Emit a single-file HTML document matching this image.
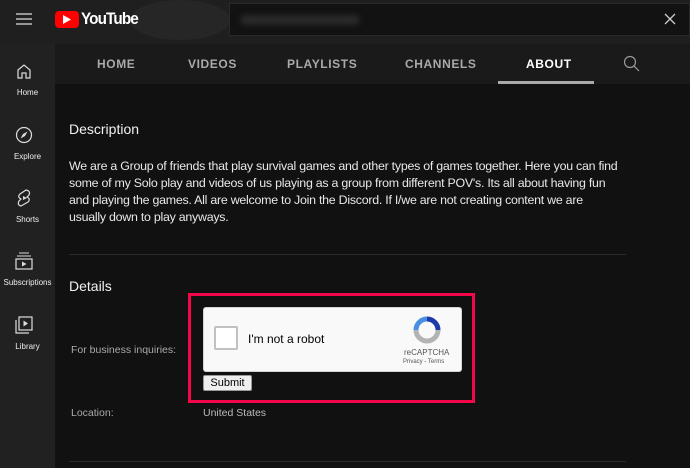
<!DOCTYPE html>
<html><head><style>
*{margin:0;padding:0;box-sizing:border-box}
body{width:690px;height:468px;overflow:hidden;background:#111;font-family:"Liberation Sans",sans-serif;position:relative;color:#eee}
.abs{position:absolute}
#top{left:0;top:0;width:690px;height:44px;background:#1f1f1f}
#side{left:0;top:44px;width:55px;height:424px;background:#212121}
#tabs{left:55px;top:44px;width:635px;height:40px;background:#1a1a1a}
.tab{position:absolute;top:57px;font-size:12px;font-weight:bold;letter-spacing:.6px;color:#aaa}
.si{position:absolute;width:55px;text-align:center;font-size:8px;color:#eee}
.desc{left:69px;top:158px;font-size:12.4px;line-height:17px;color:#e8e8e8;white-space:nowrap;letter-spacing:-0.25px}
</style></head><body>
<div class="abs" id="top"></div>
<div class="abs" style="left:130px;top:0;width:100px;height:40px;border-radius:50%;background:#262626"></div>
<div class="abs" style="left:229px;top:3px;width:461px;height:33px;background:#121212;border:1px solid #2a2a2a"></div>
<div class="abs" style="left:240px;top:15px;width:120px;height:10px;background:#2a2a2a;border-radius:5px;filter:blur(3px)"></div>
<svg class="abs" style="left:664px;top:13px" width="12" height="12"><path d="M1 1L11 11M11 1L1 11" stroke="#ccc" stroke-width="1.3"/></svg>
<svg class="abs" style="left:16px;top:13px" width="16" height="12"><path d="M0 1H16M0 6H16M0 11H16" stroke="#ddd" stroke-width="1.3"/></svg>
<div class="abs" style="left:55px;top:11px;width:24px;height:17px;background:#f00;border-radius:4px"></div>
<svg class="abs" style="left:63px;top:15px" width="8" height="9"><path d="M0 0L8 4.5L0 9Z" fill="#fff"/></svg>
<div class="abs" style="left:81px;top:9px;font-size:17px;font-weight:bold;color:#fff;letter-spacing:-1px;transform:scaleX(.9);transform-origin:left">YouTube</div>
<div class="abs" id="side"></div>
<div class="abs" id="tabs"></div>
<div class="tab" style="left:97px">HOME</div>
<div class="tab" style="left:188px">VIDEOS</div>
<div class="tab" style="left:287px">PLAYLISTS</div>
<div class="tab" style="left:405px">CHANNELS</div>
<div class="tab" style="left:526px;color:#fff">ABOUT</div>
<div class="abs" style="left:498px;top:81px;width:96px;height:3px;background:#aaa"></div>
<svg class="abs" style="left:623px;top:55px" width="17" height="17"><circle cx="7" cy="7" r="5.5" fill="none" stroke="#999" stroke-width="1.2"/><path d="M11 11L16 16" stroke="#999" stroke-width="1.2"/></svg>
<svg class="abs" style="left:16px;top:63px" width="16" height="16"><path d="M2 7L8 2L14 7V15H10V10H6V15H2Z" fill="none" stroke="#ddd" stroke-width="1.2"/></svg>
<div class="si" style="top:88px">Home</div>
<svg class="abs" style="left:15px;top:126px" width="18" height="18"><circle cx="9" cy="9" r="7.5" fill="none" stroke="#ddd" stroke-width="1.2"/><path d="M12.5 5.5L10 10L5.5 12.5L8 8Z" fill="#ddd"/></svg>
<div class="si" style="top:152px">Explore</div>
<svg class="abs" style="left:16px;top:188px" width="16" height="20"><path d="M10 2L4 6Q1 9 5 11L3 13Q1 17 5 18L12 14Q15 11 11 9L13 7Q15 3 10 2Z" fill="none" stroke="#ddd" stroke-width="1.2"/><path d="M7 8L11 10L7 12Z" fill="#ddd"/></svg>
<div class="si" style="top:215px">Shorts</div>
<svg class="abs" style="left:14px;top:252px" width="20" height="18"><path d="M5 1H15M3 4H17" stroke="#ddd" stroke-width="1.1"/><rect x="2" y="7" width="16" height="10" fill="none" stroke="#ddd" stroke-width="1.2"/><path d="M8 9.5L12.5 12L8 14.5Z" fill="#ddd"/></svg>
<div class="si" style="top:278px">Subscriptions</div>
<svg class="abs" style="left:15px;top:316px" width="18" height="18"><path d="M1 4V17H14" fill="none" stroke="#ddd" stroke-width="1.2"/><rect x="4" y="1" width="13" height="13" fill="none" stroke="#ddd" stroke-width="1.2"/><path d="M8.5 4.5L13 7.5L8.5 10.5Z" fill="#ddd"/></svg>
<div class="si" style="top:342px">Library</div>
<div class="abs" style="left:69px;top:121px;font-size:14px;color:#f1f1f1">Description</div>
<div class="abs desc">We are a Group of friends that play survival games and other types of games together. Here you can find<br>some of my Solo play and videos of us playing as a group from different POV's. Its all about having fun<br>and playing the games. All are welcome to Join the Discord. If I/we are not creating content we are<br>usually down to play anyways.</div>
<div class="abs" style="left:69px;top:254px;width:557px;height:1px;background:#2a2a2a"></div>
<div class="abs" style="left:69px;top:278px;font-size:14px;color:#f1f1f1">Details</div>
<div class="abs" style="left:71px;top:344px;font-size:10.5px;color:#aaa">For business inquiries:</div>
<div class="abs" style="left:71px;top:407px;font-size:10.5px;color:#aaa">Location:</div>
<div class="abs" style="left:203px;top:407px;font-size:10.5px;color:#bbb">United States</div>
<div class="abs" style="left:69px;top:461px;width:557px;height:1px;background:#2a2a2a"></div>
<div class="abs" style="left:188px;top:293px;width:287px;height:110px;border:3px solid #f5064a"></div>
<div class="abs" style="left:203px;top:307px;width:259px;height:65px;background:#f9f9f9;border:1px solid #d3d3d3;border-radius:3px"></div>
<div class="abs" style="left:214px;top:326px;width:24px;height:24px;background:#fff;border:2px solid #c1c1c1;border-radius:2px"></div>
<div class="abs" style="left:248px;top:332px;font-size:12px;color:#000">I'm not a robot</div>
<svg class="abs" style="left:413px;top:316px" width="28" height="28"><path d="M14 3A11 11 0 0 1 25 14" fill="none" stroke="#1c3aa9" stroke-width="5"/><path d="M3 14A11 11 0 0 1 14 3" fill="none" stroke="#4a90e2" stroke-width="5"/><path d="M25 14A11 11 0 0 1 3 14" fill="none" stroke="#b3b3b3" stroke-width="5"/></svg>
<div class="abs" style="left:404px;top:348px;font-size:8px;color:#555">reCAPTCHA</div>
<div class="abs" style="left:403px;top:359px;font-size:6px;color:#555">Privacy - Terms</div>
<div class="abs" style="left:203px;top:375px;width:49px;height:16px;background:#efefef;border:1px solid #999;border-radius:2px;font-size:11px;color:#000;text-align:center;line-height:14px">Submit</div>
</body></html>
